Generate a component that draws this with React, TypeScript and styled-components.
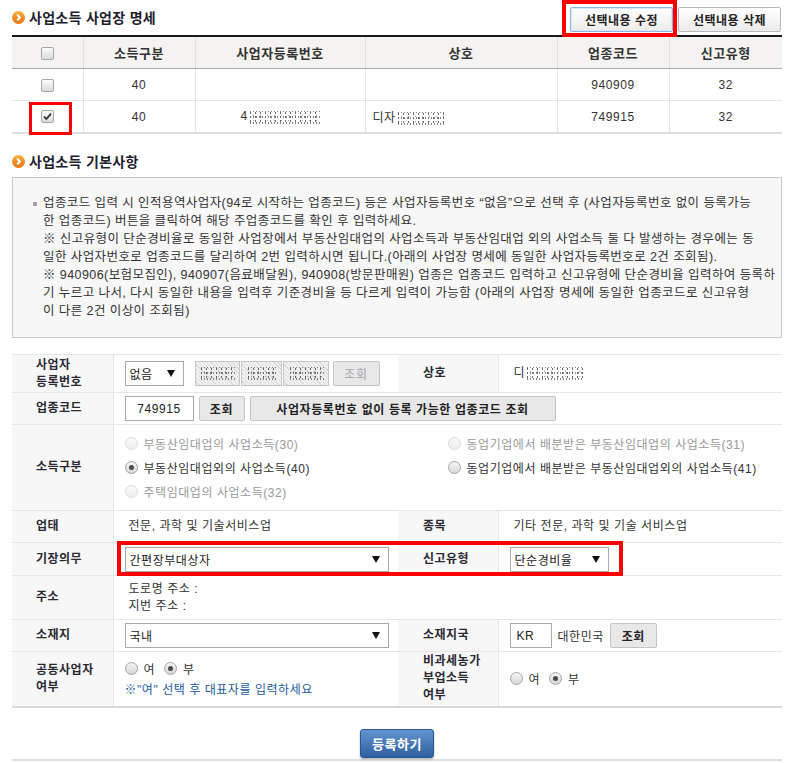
import React from 'react';
import styled, { createGlobalStyle, css } from 'styled-components';

const GlobalStyle = createGlobalStyle`
  html, body {
    margin: 0;
    padding: 0;
    background: #fff;
  }
  body {
    font-family: "Liberation Sans", "Noto Sans CJK KR", sans-serif;
    font-size: 12px;
    letter-spacing: 0.55px;
    color: #333;
  }
`;

const Page = styled.div`
  width: 770px;
  margin-left: 12px;
`;

const TitleBar = styled.div<{ $h: number }>`
  display: flex;
  align-items: flex-start;
  justify-content: space-between;
  height: ${(p) => p.$h}px;
`;

const Title = styled.h2<{ $pt: number }>`
  display: flex;
  align-items: center;
  gap: 4px;
  margin: 0;
  padding-top: ${(p) => p.$pt}px;
  height: 20px;
  font-size: 14px;
  font-weight: bold;
  color: #1e1e2e;
  letter-spacing: 0.3px;
`;

const TopButtons = styled.div`
  display: flex;
  gap: 5px;
  padding-top: 7px;
  padding-right: 1px;
`;

const LightButton = styled.button<{ $focus?: boolean }>`
  width: 103px;
  height: 25px;
  padding: 0;
  box-sizing: border-box;
  border: 1px solid ${(p) => (p.$focus ? '#8fb6e3' : '#b9b9b9')};
  border-radius: 2px;
  background: linear-gradient(#ffffff, #ebebeb);
  font-family: inherit;
  font-size: 12px;
  font-weight: bold;
  color: #222;
  letter-spacing: 0.5px;
  ${(p) =>
    p.$focus &&
    css`
      box-shadow: inset 0 0 0 1px #d6e7f8;
    `}
`;

const Marked = styled.span`
  position: relative;
  display: inline-flex;
`;

const RedMark = styled.span<{ $l: number; $t: number; $w: number; $h: number; $b: number }>`
  position: absolute;
  left: ${(p) => p.$l}px;
  top: ${(p) => p.$t}px;
  width: ${(p) => p.$w}px;
  height: ${(p) => p.$h}px;
  box-sizing: border-box;
  border: ${(p) => p.$b}px solid #ff0000;
  pointer-events: none;
`;

const ListTable = styled.table`
  width: 770px;
  border-collapse: collapse;
  table-layout: fixed;
  border-top: 2px solid #1a1a1a;
  border-bottom: 2px solid #dedede;
`;

const Th = styled.th`
  height: 31px;
  padding: 0;
  background: #f4f3f1;
  border-left: 1px solid #e2e2e2;
  border-bottom: 1px solid #a9a9a9;
  font-size: 13px;
  font-weight: bold;
  color: #333;
  text-align: center;
  &:first-child {
    border-left: none;
  }
`;

const Td = styled.td<{ $align?: 'left' | 'center' }>`
  height: 31px;
  padding: 0 7px;
  border-left: 1px solid #e2e2e2;
  border-top: 1px solid #e6e6e6;
  text-align: ${(p) => p.$align ?? 'center'};
  font-size: 12px;
  color: #333;
  &:first-child {
    border-left: none;
  }
`;

const Check = styled.span`
  display: inline-flex;
  align-items: center;
  justify-content: center;
  width: 13px;
  height: 13px;
  box-sizing: border-box;
  border: 1px solid #a8a8a8;
  border-radius: 2px;
  background: linear-gradient(#fbfbfb, #dadada);
  vertical-align: middle;
`;

const Blur = styled.span<{ $w: number }>`
  display: inline-block;
  width: ${(p) => p.$w}px;
  height: 13px;
  vertical-align: middle;
  background-image: radial-gradient(circle, #444 0.8px, transparent 1.1px),
    radial-gradient(circle, #888 0.7px, transparent 1px),
    radial-gradient(circle, #666 0.6px, transparent 0.9px);
  background-size: 5px 4px, 7px 5px, 3px 6px;
  background-position: 0 0, 2px 2px, 1px 3px;
  opacity: 0.8;
`;

const NoticeBox = styled.div`
  box-sizing: border-box;
  height: 161px;
  padding: 16px 10px 0 30px;
  border: 1px solid #c9c9c9;
  background: #f7f7f7;
`;

const NoticeLine = styled.div`
  white-space: nowrap;
  font-size: 12.5px;
  line-height: 18px;
  letter-spacing: 0.42px;
  color: #333;
`;

const Bullet = styled.span`
  display: inline-block;
  width: 4px;
  height: 4px;
  margin-left: -10px;
  margin-right: 6px;
  background: #a0a0a0;
  vertical-align: middle;
`;

const FormTable = styled.table`
  width: 770px;
  margin-top: 16px;
  border-collapse: collapse;
  table-layout: fixed;
  border-top: 1px solid #cfcfcf;
  border-bottom: 2px solid #d9d9d9;
`;

const Row = styled.tr<{ $h: number }>`
  height: ${(p) => p.$h}px;
`;

const Label = styled.th<{ $pl?: number }>`
  padding: 0 0 0 ${(p) => p.$pl ?? 24}px;
  background: #f7f7f7;
  border-top: 1px solid #e6e6e6;
  border-right: 1px solid #e6e6e6;
  text-align: left;
  vertical-align: middle;
  font-size: 12px;
  font-weight: bold;
  line-height: 17px;
  color: #2a2a35;
  letter-spacing: 0.5px;
`;

const Value = styled.td`
  padding: 0 11px;
  border-top: 1px solid #e6e6e6;
  vertical-align: middle;
  font-size: 12px;
  color: #333;
`;

const Inline = styled.div<{ $gap?: number }>`
  display: flex;
  align-items: center;
  gap: ${(p) => p.$gap ?? 0}px;
`;

const Text = styled.span`
  padding-left: 4px;
  white-space: nowrap;
  line-height: 17px;
`;

const Plain = styled.span`
  white-space: nowrap;
`;

const SelectBox = styled.div<{ $w: number }>`
  display: flex;
  align-items: center;
  justify-content: space-between;
  width: ${(p) => p.$w}px;
  height: 25px;
  box-sizing: border-box;
  padding: 0 8px 0 4px;
  border: 1px solid #a9a9a9;
  background: #fff;
  font-size: 12px;
  color: #222;
`;

const TextInput = styled.div<{ $w: number; $center?: boolean }>`
  display: flex;
  align-items: center;
  justify-content: ${(p) => (p.$center ? 'center' : 'flex-start')};
  width: ${(p) => p.$w}px;
  height: 25px;
  box-sizing: border-box;
  padding: 0 6px;
  border: 1px solid #a9a9a9;
  background: #fff;
  font-size: 12px;
  color: #222;
`;

const Hatched = styled.div<{ $w: number }>`
  display: flex;
  align-items: center;
  justify-content: center;
  width: ${(p) => p.$w}px;
  height: 25px;
  box-sizing: border-box;
  border: 1px solid #c6c6c6;
  background: repeating-linear-gradient(45deg, #f1f1f1 0 2px, #dcdcdc 2px 3px);
`;

const GrayButton = styled.button<{ $w: number; $disabled?: boolean }>`
  width: ${(p) => p.$w}px;
  height: 25px;
  padding: 0;
  box-sizing: border-box;
  border: 1px solid #c4c4c4;
  border-radius: 2px;
  background: #e8e8e8;
  font-family: inherit;
  font-size: 12px;
  font-weight: ${(p) => (p.$disabled ? 'normal' : 'bold')};
  color: ${(p) => (p.$disabled ? '#a3a3a3' : '#222')};
  letter-spacing: 0.6px;
  white-space: nowrap;
`;

const RadioGrid = styled.div`
  display: grid;
  grid-template-columns: 323px auto;
  grid-auto-rows: 24px;
  align-items: center;
`;

const RadioItem = styled.label<{ $disabled?: boolean }>`
  display: flex;
  align-items: center;
  gap: 6px;
  white-space: nowrap;
  color: ${(p) => (p.$disabled ? '#9a9a9a' : '#333')};
`;

const Radio = styled.span<{ $checked?: boolean; $disabled?: boolean }>`
  position: relative;
  flex-shrink: 0;
  width: 13px;
  height: 13px;
  box-sizing: border-box;
  border-radius: 50%;
  border: 1px solid ${(p) => (p.$disabled ? '#dadada' : '#a6a6a6')};
  background: ${(p) =>
    p.$disabled ? 'linear-gradient(#fafafa, #ededed)' : 'linear-gradient(#f6f6f6, #d6d6d6)'};
  ${(p) =>
    p.$checked &&
    css`
      &::after {
        content: '';
        position: absolute;
        left: 3px;
        top: 3px;
        width: 5px;
        height: 5px;
        border-radius: 50%;
        background: #4a4a4a;
      }
    `}
`;

const YesNo = styled.div`
  display: flex;
  align-items: center;
  gap: 9px;
`;

const Note = styled.div`
  margin-top: 3px;
  color: #1a5c9e;
  white-space: nowrap;
`;

const Stack = styled.div`
  display: flex;
  flex-direction: column;
  justify-content: center;
`;

const SubmitBar = styled.div`
  display: flex;
  justify-content: center;
  padding: 21px 0 1px;
  border-bottom: 2px solid #dedede;
`;

const SubmitButton = styled.button`
  width: 74px;
  height: 29px;
  padding: 0;
  border: 1px solid #2c5791;
  border-radius: 3px;
  background: linear-gradient(#6294d0, #2f609f);
  box-shadow: 0 1px 2px rgba(0, 0, 0, 0.35);
  font-family: inherit;
  font-size: 13px;
  font-weight: bold;
  color: #fff;
  letter-spacing: 0.5px;
`;

const TitleIcon = () => (
  <svg width="13" height="13" viewBox="0 0 13 13">
    <defs>
      <linearGradient id="titleIconGrad" x1="0" y1="0" x2="0" y2="1">
        <stop offset="0" stopColor="#fbb445" />
        <stop offset="1" stopColor="#e5700d" />
      </linearGradient>
    </defs>
    <circle cx="6.5" cy="6.5" r="6.5" fill="url(#titleIconGrad)" />
    <path d="M5.2 3.7 L7.9 6.5 L5.2 9.3" fill="none" stroke="#fff" strokeWidth="1.9" />
  </svg>
);

const CheckMark = () => (
  <svg width="9" height="9" viewBox="0 0 9 9">
    <path d="M1 4.6 L3.4 7 L8 1.6" fill="none" stroke="#333" strokeWidth="1.8" />
  </svg>
);

const Arrow = () => (
  <svg width="8" height="7" viewBox="0 0 8 7">
    <path d="M0 0 H8 L4 7 Z" fill="#111" />
  </svg>
);

const listRows = [
  { type: '40', reg: '', name: '', code: '940909', kind: '32', checked: false },
  { type: '40', reg: '4', name: '디자', code: '749915', kind: '32', checked: true },
];

const incomeOptions = [
  { text: '부동산임대업의 사업소득(30)', disabled: true },
  { text: '동업기업에서 배분받은 부동산임대업의 사업소득(31)', disabled: true },
  { text: '부동산임대업외의 사업소득(40)', checked: true },
  { text: '동업기업에서 배분받은 부동산임대업외의 사업소득(41)' },
  { text: '주택임대업의 사업소득(32)', disabled: true },
];

const YesNoRadios = () => (
  <YesNo>
    <RadioItem>
      <Radio />여
    </RadioItem>
    <RadioItem>
      <Radio $checked />부
    </RadioItem>
  </YesNo>
);

export default function App() {
  return (
    <>
      <GlobalStyle />
      <Page>
        <TitleBar $h={35}>
          <Title $pt={7}>
            <TitleIcon />
            사업소득 사업장 명세
          </Title>
          <TopButtons>
            <Marked>
              <LightButton $focus>선택내용 수정</LightButton>
              <RedMark $l={-8} $t={-7} $w={115} $h={37} $b={4} />
            </Marked>
            <LightButton>선택내용 삭제</LightButton>
          </TopButtons>
        </TitleBar>

        <ListTable>
          <colgroup>
            <col style={{ width: 71 }} />
            <col style={{ width: 112 }} />
            <col style={{ width: 170 }} />
            <col style={{ width: 192 }} />
            <col style={{ width: 112 }} />
            <col style={{ width: 113 }} />
          </colgroup>
          <thead>
            <tr>
              <Th>
                <Check />
              </Th>
              <Th>소득구분</Th>
              <Th>사업자등록번호</Th>
              <Th>상호</Th>
              <Th>업종코드</Th>
              <Th>신고유형</Th>
            </tr>
          </thead>
          <tbody>
            {listRows.map((r, i) => (
              <tr key={i}>
                <Td>
                  {r.checked ? (
                    <Marked>
                      <Check>
                        <CheckMark />
                      </Check>
                      <RedMark $l={-12} $t={-8} $w={43} $h={33} $b={3} />
                    </Marked>
                  ) : (
                    <Check />
                  )}
                </Td>
                <Td>{r.type}</Td>
                <Td>
                  {r.reg && (
                    <>
                      {r.reg}
                      <Blur $w={72} />
                    </>
                  )}
                </Td>
                <Td $align="left">
                  {r.name && (
                    <>
                      {r.name}
                      <Blur $w={48} />
                    </>
                  )}
                </Td>
                <Td>{r.code}</Td>
                <Td>{r.kind}</Td>
              </tr>
            ))}
          </tbody>
        </ListTable>

        <TitleBar $h={43}>
          <Title $pt={17}>
            <TitleIcon />
            사업소득 기본사항
          </Title>
        </TitleBar>

        <NoticeBox>
          <NoticeLine>
            <Bullet />
            업종코드 입력 시 인적용역사업자(94로 시작하는 업종코드) 등은 사업자등록번호 “없음”으로 선택 후 (사업자등록번호 없이 등록가능
          </NoticeLine>
          <NoticeLine>한 업종코드) 버튼을 클릭하여 해당 주업종코드를 확인 후 입력하세요.</NoticeLine>
          <NoticeLine>
            ※ 신고유형이 단순경비율로 동일한 사업장에서 부동산임대업의 사업소득과 부동산임대업 외의 사업소득 둘 다 발생하는 경우에는 동
          </NoticeLine>
          <NoticeLine>
            일한 사업자번호로 업종코드를 달리하여 2번 입력하시면 됩니다.(아래의 사업장 명세에 동일한 사업자등록번호로 2건 조회됨).
          </NoticeLine>
          <NoticeLine>
            ※ 940906(보험모집인), 940907(음료배달원), 940908(방문판매원) 업종은 업종코드 입력하고 신고유형에 단순경비율 입력하여 등록하
          </NoticeLine>
          <NoticeLine>
            기 누르고 나서, 다시 동일한 내용을 입력후 기준경비율 등 다르게 입력이 가능함 (아래의 사업장 명세에 동일한 업종코드로 신고유형
          </NoticeLine>
          <NoticeLine>이 다른 2건 이상이 조회됨)</NoticeLine>
        </NoticeBox>

        <FormTable>
          <colgroup>
            <col style={{ width: 101 }} />
            <col style={{ width: 285 }} />
            <col style={{ width: 100 }} />
            <col style={{ width: 284 }} />
          </colgroup>
          <tbody>
            <Row $h={38}>
              <Label>
                사업자
                <br />
                등록번호
              </Label>
              <Value>
                <Inline>
                  <SelectBox $w={59}>
                    없음
                    <Arrow />
                  </SelectBox>
                  <Inline $gap={1} style={{ marginLeft: 11 }}>
                    <Hatched $w={45}>
                      <Blur $w={36} />
                    </Hatched>
                    <Hatched $w={41}>
                      <Blur $w={30} />
                    </Hatched>
                    <Hatched $w={46}>
                      <Blur $w={36} />
                    </Hatched>
                  </Inline>
                  <GrayButton $w={47} $disabled style={{ marginLeft: 4 }}>
                    조회
                  </GrayButton>
                </Inline>
              </Value>
              <Label $pl={25}>상호</Label>
              <Value>
                <Text>
                  디<Blur $w={58} />
                </Text>
              </Value>
            </Row>

            <Row $h={32}>
              <Label>업종코드</Label>
              <Value colSpan={3}>
                <Inline $gap={5}>
                  <TextInput $w={69} $center>
                    749915
                  </TextInput>
                  <GrayButton $w={46}>조회</GrayButton>
                  <GrayButton $w={306}>사업자등록번호 없이 등록 가능한 업종코드 조회</GrayButton>
                </Inline>
              </Value>
            </Row>

            <Row $h={86}>
              <Label>소득구분</Label>
              <Value colSpan={3}>
                <RadioGrid>
                  {incomeOptions.map((o) => (
                    <RadioItem key={o.text} $disabled={o.disabled}>
                      <Radio $checked={o.checked} $disabled={o.disabled} />
                      {o.text}
                    </RadioItem>
                  ))}
                </RadioGrid>
              </Value>
            </Row>

            <Row $h={32}>
              <Label>업태</Label>
              <Value>
                <Text>전문, 과학 및 기술서비스업</Text>
              </Value>
              <Label $pl={25}>종목</Label>
              <Value>
                <Text>기타 전문, 과학 및 기술 서비스업</Text>
              </Value>
            </Row>

            <Row $h={33}>
              <Label>기장의무</Label>
              <Value>
                <Marked>
                  <SelectBox $w={264}>
                    간편장부대상자
                    <Arrow />
                  </SelectBox>
                  <RedMark $l={-8} $t={-6} $w={506} $h={35} $b={4} />
                </Marked>
              </Value>
              <Label $pl={25}>신고유형</Label>
              <Value>
                <SelectBox $w={99}>
                  단순경비율
                  <Arrow />
                </SelectBox>
              </Value>
            </Row>

            <Row $h={44}>
              <Label>주소</Label>
              <Value colSpan={3}>
                <Stack>
                  <Text>도로명 주소 :</Text>
                  <Text>지번 주소 :</Text>
                </Stack>
              </Value>
            </Row>

            <Row $h={32}>
              <Label>소재지</Label>
              <Value>
                <SelectBox $w={264}>
                  국내
                  <Arrow />
                </SelectBox>
              </Value>
              <Label $pl={25}>소재지국</Label>
              <Value>
                <Inline $gap={6}>
                  <TextInput $w={42}>KR</TextInput>
                  <Plain>대한민국</Plain>
                  <GrayButton $w={47}>조회</GrayButton>
                </Inline>
              </Value>
            </Row>

            <Row $h={55}>
              <Label>
                공동사업자
                <br />
                여부
              </Label>
              <Value>
                <Stack>
                  <YesNoRadios />
                  <Note>※"여" 선택 후 대표자를 입력하세요</Note>
                </Stack>
              </Value>
              <Label $pl={25}>
                비과세농가
                <br />
                부업소득
                <br />
                여부
              </Label>
              <Value>
                <YesNoRadios />
              </Value>
            </Row>
          </tbody>
        </FormTable>

        <SubmitBar>
          <SubmitButton>등록하기</SubmitButton>
        </SubmitBar>
      </Page>
    </>
  );
}
